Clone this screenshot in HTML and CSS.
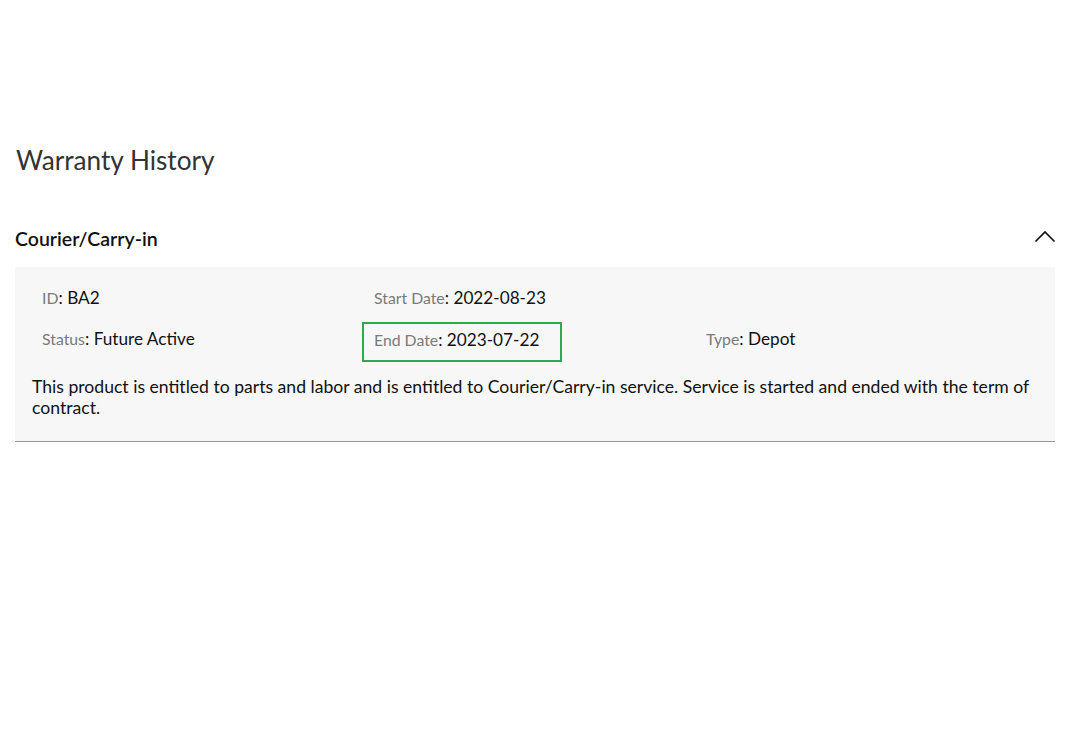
FILE: index.html
```html
<!DOCTYPE html>
<html lang="en">
<head>
    <meta charset="UTF-8">
    <meta name="viewport" content="width=device-width, initial-scale=1.0">
    <title>Warranty History</title>
    <link rel="stylesheet" href="styles.css">
</head>
<body>
    <div class="container">
        <h1 class="page-title">Warranty History</h1>

        <div class="accordion">
            <div class="accordion-header">
                <h2>Courier/Carry-in</h2>
                <svg class="chevron" width="22" height="14" viewBox="0 0 22 14">
                    <polyline points="1.5,12.5 11,3 20.5,12.5" fill="none" stroke="#111" stroke-width="1.6"/>
                </svg>
            </div>

            <div class="accordion-body">
                <div class="details">
                    <div class="field"><span class="label">ID</span>: <span class="value">BA2</span></div>
                    <div class="field"><span class="label">Start Date</span>: <span class="value">2022-08-23</span></div>
                    <div class="field"></div>
                    <div class="field"><span class="label">Status</span>: <span class="value">Future Active</span></div>
                    <div class="field highlight"><span class="label">End Date</span>: <span class="value">2023-07-22</span></div>
                    <div class="field"><span class="label">Type</span>: <span class="value">Depot</span></div>
                </div>
                <p class="description">This product is entitled to parts and labor and is entitled to Courier/Carry-in service. Service is started and ended with the term of contract.</p>
            </div>
        </div>
    </div>
</body>
</html>
```

FILE: styles.css
```css
/* Global */
body {
    font-family: 'Lato', 'Open Sans', sans-serif;
    margin: 0;
    padding: 0;
    background-color: #fff;
    color: #111;
}

.container {
    padding: 140px 23px 0 15px;
}

/* Title */
.page-title {
    font-size: 26.2px;
    font-weight: 400;
    color: #333;
    margin: 0 0 0 1px;
    line-height: 40px;
}

/* Accordion */
.accordion {
    margin-top: 37px;
}

.accordion-header {
    display: flex;
    justify-content: space-between;
    align-items: center;
    height: 50px;
    padding-bottom: 8px;
    box-sizing: border-box;
}

.accordion-header h2 {
    font-size: 19.5px;
    font-weight: 600;
    margin: 0;
    color: #111;
}

.chevron {
    margin-right: -1px;
    margin-top: -4px;
}

.accordion-body {
    background-color: #f7f7f7;
    border-bottom: 1px solid #999;
    padding: 10px 17px 23px 17px;
}

/* Details grid */
.details {
    display: grid;
    grid-template-columns: 332px 332px 332px;
    grid-auto-rows: 41px;
}

.field {
    padding-left: 10px;
    font-size: 17.2px;
    display: flex;
    align-items: center;
    box-sizing: border-box;
    white-space: pre;
}

.field .label {
    font-size: 15.8px;
    color: #7a7a7a;
}

.highlight {
    border: 2px solid #2eaa4e;
    width: 200px;
    height: 40px;
    margin: 4px 0 0 -2px;
    padding-bottom: 6px;
}

.description {
    font-size: 17.6px;
    line-height: 21px;
    margin: 17px 0 0 0;
}
```
